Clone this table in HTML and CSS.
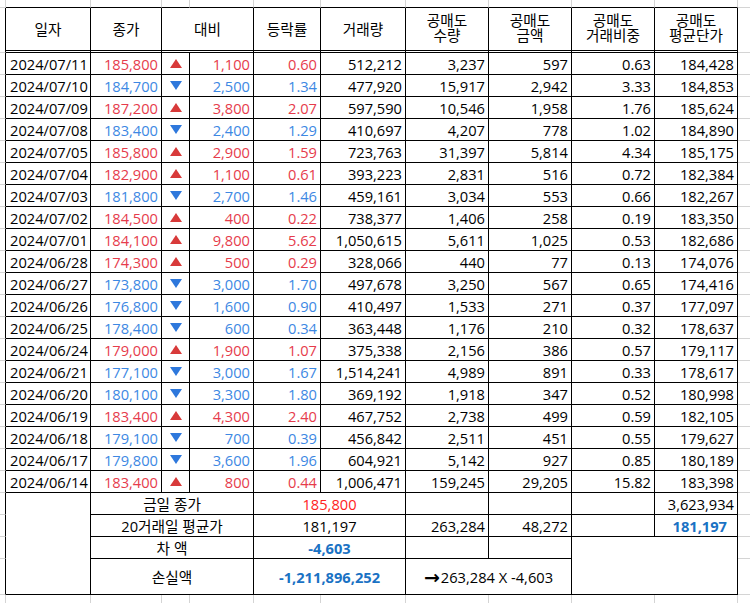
FILE: index.html
```html
<!DOCTYPE html>
<html lang="ko">
<head>
<meta charset="utf-8">
<title>공매도 현황</title>
<link rel="stylesheet" href="styles.css">
</head>
<body>
<div class="sheet">
<table class="grid">
<colgroup>
<col class="c0"><col class="c1"><col class="c2"><col class="c3"><col class="c4"><col class="c5"><col class="c6"><col class="c7"><col class="c8"><col class="c9"><col class="c10"><col class="c11">
</colgroup>
<tbody>
<tr class="top">
<td class="gm"></td><td class="tg"></td><td class="tg"></td><td class="tg"></td><td class="tg"></td><td class="tg"></td><td class="tg"></td><td class="tg"></td><td class="tg"></td><td class="tg"></td><td class="tg"></td><td class="gr"></td>
</tr>
<tr class="head">
<td class="ml"></td>
<th>일자</th><th>종가</th><th colspan="2">대비</th><th>등락률</th><th>거래량</th>
<th class="two"><span class="ln">공매도</span><span class="ln">수량</span></th>
<th class="two"><span class="ln">공매도</span><span class="ln">금액</span></th>
<th class="two"><span class="ln">공매도</span><span class="ln">거래비중</span></th>
<th class="two"><span class="ln">공매도</span><span class="ln">평균단가</span></th>
<td class="mr"></td>
</tr>
</tbody>
<tbody id="rows"></tbody>
<tbody>
<tr class="sum">
<td class="ml"></td>
<td class="c" rowspan="4"></td>
<td class="c lbl" colspan="3">금일 종가</td>
<td class="c mid red2" colspan="2">185,800</td>
<td class="c"></td><td class="c"></td><td class="c"></td>
<td class="c num">3,623,934</td>
<td class="mr"></td>
</tr>
<tr class="sum">
<td class="ml"></td>
<td class="c lbl" colspan="3">20거래일 평균가</td>
<td class="c mid" colspan="2">181,197</td>
<td class="c num">263,284</td><td class="c num">48,272</td><td class="c"></td>
<td class="c num bblue pad">181,197</td>
<td class="mr"></td>
</tr>
<tr class="sum">
<td class="ml"></td>
<td class="c lbl" colspan="3">차 액</td>
<td class="c mid bblue" colspan="2">-4,603</td>
<td class="c"></td><td class="c"></td>
<td class="c" colspan="2" rowspan="2"></td>
<td class="mr"></td>
</tr>
<tr class="loss">
<td class="ml"></td>
<td class="c lbl" colspan="3">손실액</td>
<td class="c mid bblue" colspan="2">-1,211,896,252</td>
<td class="c mid" colspan="2"><span class="arrow">→</span>263,284 X -4,603</td>
<td class="mr"></td>
</tr>
<tr class="bottom">
<td class="bg"></td><td class="bg"></td><td class="bg"></td><td class="bg"></td><td class="bg"></td><td class="bg"></td><td class="bg"></td><td class="bg"></td><td class="bg"></td><td class="bg"></td><td class="bg"></td><td></td>
</tr>
</tbody>
</table>
</div>
<script src="app.js"></script>
</body>
</html>
```

FILE: app.js
```js
const data = [
["2024/07/11","185,800","u","1,100","0.60","512,212","3,237","597","0.63","184,428"],
["2024/07/10","184,700","d","2,500","1.34","477,920","15,917","2,942","3.33","184,853"],
["2024/07/09","187,200","u","3,800","2.07","597,590","10,546","1,958","1.76","185,624"],
["2024/07/08","183,400","d","2,400","1.29","410,697","4,207","778","1.02","184,890"],
["2024/07/05","185,800","u","2,900","1.59","723,763","31,397","5,814","4.34","185,175"],
["2024/07/04","182,900","u","1,100","0.61","393,223","2,831","516","0.72","182,384"],
["2024/07/03","181,800","d","2,700","1.46","459,161","3,034","553","0.66","182,267"],
["2024/07/02","184,500","u","400","0.22","738,377","1,406","258","0.19","183,350"],
["2024/07/01","184,100","u","9,800","5.62","1,050,615","5,611","1,025","0.53","182,686"],
["2024/06/28","174,300","u","500","0.29","328,066","440","77","0.13","174,076"],
["2024/06/27","173,800","d","3,000","1.70","497,678","3,250","567","0.65","174,416"],
["2024/06/26","176,800","d","1,600","0.90","410,497","1,533","271","0.37","177,097"],
["2024/06/25","178,400","d","600","0.34","363,448","1,176","210","0.32","178,637"],
["2024/06/24","179,000","u","1,900","1.07","375,338","2,156","386","0.57","179,117"],
["2024/06/21","177,100","d","3,000","1.67","1,514,241","4,989","891","0.33","178,617"],
["2024/06/20","180,100","d","3,300","1.80","369,192","1,918","347","0.52","180,998"],
["2024/06/19","183,400","u","4,300","2.40","467,752","2,738","499","0.59","182,105"],
["2024/06/18","179,100","d","700","0.39","456,842","2,511","451","0.55","179,627"],
["2024/06/17","179,800","d","3,600","1.96","604,921","5,142","927","0.85","180,189"],
["2024/06/14","183,400","u","800","0.44","1,006,471","159,245","29,205","15.82","183,398"]
];
const up = '<svg class="tri up" viewBox="0 0 12 9" width="12" height="9"><polygon points="6,0 12,9 0,9"/></svg>';
const down = '<svg class="tri down" viewBox="0 0 12 9" width="12" height="9"><polygon points="0,0 12,0 6,9"/></svg>';
const tb = document.getElementById('rows');
tb.innerHTML = data.map(r => {
  const cls = r[2] === 'u' ? 'red' : 'blue';
  return '<tr class="d">' +
    '<td class="ml"></td>' +
    '<td class="c date">' + r[0] + '</td>' +
    '<td class="c num ' + cls + '">' + r[1] + '</td>' +
    '<td class="c mid">' + (r[2] === 'u' ? up : down) + '</td>' +
    '<td class="c num ' + cls + '">' + r[3] + '</td>' +
    '<td class="c num ' + cls + '">' + r[4] + '</td>' +
    '<td class="c num">' + r[5] + '</td>' +
    '<td class="c num">' + r[6] + '</td>' +
    '<td class="c num">' + r[7] + '</td>' +
    '<td class="c num">' + r[8] + '</td>' +
    '<td class="c num">' + r[9] + '</td>' +
    '<td class="mr"></td></tr>';
}).join('');
```

FILE: styles.css
```css
html, body {
  margin: 0;
  padding: 0;
  overflow: hidden;
  background: #fff;
}
.sheet {
  width: 750px;
  height: 603px;
  overflow: hidden;
}
.grid {
  border-collapse: separate;
  border-spacing: 0;
  table-layout: fixed;
  width: 778px;
  font-family: "Open Sans", "Noto Sans CJK KR", sans-serif;
  font-size: 14.67px;
  color: #000;
}
.c0 { width: 6px; }
.c1 { width: 85px; }
.c2 { width: 71px; }
.c3 { width: 28px; }
.c4 { width: 64px; }
.c5 { width: 67px; }
.c6 { width: 85px; }
.c7 { width: 83px; }
.c8 { width: 83px; }
.c9 { width: 83px; }
.c10 { width: 83px; }
.c11 { width: 40px; }

.grid td, .grid th {
  padding: 0 3px;
  box-sizing: border-box;
  white-space: nowrap;
  vertical-align: middle;
  line-height: 18px;
  overflow: visible;
}

tr.top { height: 8px; }
tr.head { height: 45px; }
tr.d { height: 22px; }
tr.sum { height: 22px; }
tr.loss { height: 36px; }
tr.bottom { height: 20px; }

.grid .gm { border-right: 1px solid #d4d4d4; border-bottom: 1px solid #d4d4d4; }
.grid .tg { border-right: 1px solid #d4d4d4; border-bottom: 1px solid #000; }
.grid .gr { border-bottom: 1px solid #d4d4d4; }
.grid .bg { border-right: 1px solid #d4d4d4; }
.grid .ml { border-right: 1px solid #000; border-bottom: 1px solid #d4d4d4; }
.grid .mr { border-bottom: 1px solid #d4d4d4; }

.grid th {
  font-weight: 400;
  text-align: center;
  border-right: 1px solid #000;
  border-bottom: 3px double #000;
}
.grid th.two { padding-bottom: 2px; }
.ln { display: block; height: 15px; line-height: 15px; }

.grid .c { border-right: 1px solid #000; border-bottom: 1px solid #000; }
.grid td.date { text-align: left; padding-left: 4px; }
.grid .num { text-align: right; }
.grid .mid, .grid .lbl { text-align: center; }
.grid td.pad { padding-right: 10px; }

.red { color: #e63c4c; }
.blue { color: #3d88e3; }
.red2 { color: #ff2222; }
.bblue { color: #1a72c4; font-weight: 700; }

.tri { display: block; margin: 0 auto; }
.tri.up { fill: #d83a3a; }
.tri.down { fill: #2e78dc; }

.arrow {
  font-family: "DejaVu Sans", sans-serif;
  font-weight: 700;
  font-size: 19px;
  line-height: 18px;
  vertical-align: top;
  margin-right: 1px;
}
```
